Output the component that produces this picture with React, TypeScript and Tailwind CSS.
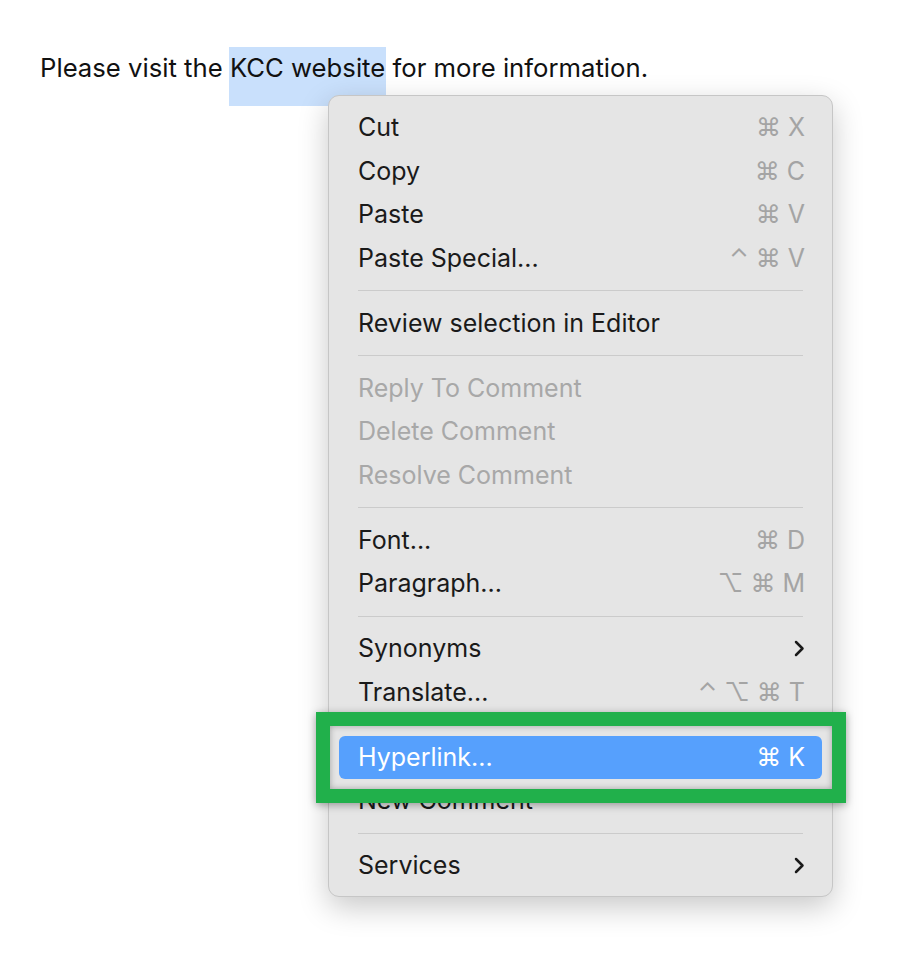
import React from 'react'

type Item = {
  label: string
  keys?: string[]
  submenu?: boolean
  disabled?: boolean
  active?: boolean
}

const groups: Item[][] = [
  [
    { label: 'Cut', keys: ['⌘', 'X'] },
    { label: 'Copy', keys: ['⌘', 'C'] },
    { label: 'Paste', keys: ['⌘', 'V'] },
    { label: 'Paste Special...', keys: ['⌃', '⌘', 'V'] },
  ],
  [{ label: 'Review selection in Editor' }],
  [
    { label: 'Reply To Comment', disabled: true },
    { label: 'Delete Comment', disabled: true },
    { label: 'Resolve Comment', disabled: true },
  ],
  [
    { label: 'Font...', keys: ['⌘', 'D'] },
    { label: 'Paragraph...', keys: ['⌥', '⌘', 'M'] },
  ],
  [
    { label: 'Synonyms', submenu: true },
    { label: 'Translate...', keys: ['⌃', '⌥', '⌘', 'T'] },
  ],
  [
    { label: 'Hyperlink...', keys: ['⌘', 'K'], active: true },
    { label: 'New Comment' },
  ],
  [{ label: 'Services', submenu: true }],
]

const Chevron = ({ color }: { color: string }) => (
  <svg width="12" height="17" viewBox="0 0 12 17" fill="none">
    <polyline
      points="3,2 9.5,8.5 3,15"
      stroke={color}
      strokeWidth="2.5"
      strokeLinecap="round"
      strokeLinejoin="round"
    />
  </svg>
)

const Row = ({ item }: { item: Item }) => {
  const textColor = item.active
    ? 'text-white'
    : item.disabled
    ? 'text-[#a8a8a8]'
    : 'text-[#1a1a1a]'
  return (
    <div
      className={`h-[43.5px] pl-[19px] pr-[17px] flex items-center justify-between rounded-[6px] ${
        item.active ? 'bg-[#56a0fd]' : ''
      }`}
    >
      <span className={`text-[25px] ${textColor}`}>{item.label}</span>
      {item.keys && (
        <span
          className={`flex items-center gap-[7px] text-[25px] ${
            item.active ? 'text-white' : 'text-[#a4a4a4]'
          }`}
        >
          {item.keys.map((k, i) => (
            <span key={i}>{k}</span>
          ))}
        </span>
      )}
      {item.submenu && <Chevron color="#1a1a1a" />}
    </div>
  )
}

const App = () => {
  return (
    <div className="relative w-[900px] h-[971px] bg-white font-['Inter','Liberation_Sans',sans-serif]">
      <p className="pl-[40px] pt-[47px] text-[25.7px] leading-[29px] text-[#111]">
        Please visit the{' '}
        <span className="inline-block bg-[#c9e0fc] pt-[6px] pb-[24px] -mx-[1px] px-[1px]">
          KCC website
        </span>{' '}
        for more information.
      </p>

      {/* context menu */}
      <div className="absolute left-[328px] top-[95px] w-[505px] pt-[10px] pb-[8px] px-[10px] bg-[#e5e5e5] border border-[#c6c6c6] rounded-[11px] shadow-[0_10px_30px_rgba(0,0,0,0.22)]">
        {groups.map((group, gi) => (
          <div key={gi}>
            {gi > 0 && (
              <div className="h-[21.5px] flex items-center px-[19px]">
                <div className="h-px w-full bg-[#cbcbcb]" />
              </div>
            )}
            {group.map((item) => (
              <Row key={item.label} item={item} />
            ))}
          </div>
        ))}
      </div>

      {/* annotation box */}
      <div className="absolute left-[316px] top-[712px] w-[530px] h-[91px] border-[14px] border-[#21b04b] shadow-[0_2px_8px_rgba(0,0,0,0.35),inset_0_0_6px_rgba(0,0,0,0.3)]" />
    </div>
  )
}

export default App
